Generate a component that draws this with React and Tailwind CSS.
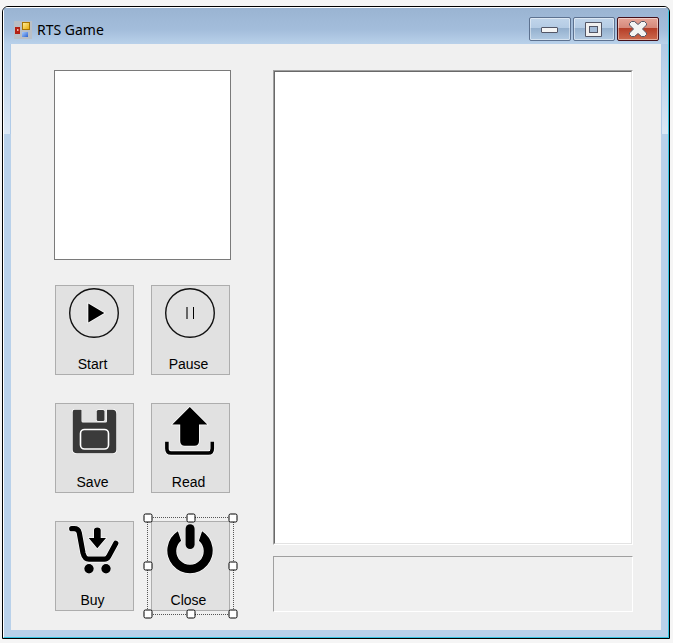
import React from "react";

function StartIcon() {
  return (
    <svg viewBox="0 0 50 50" className="size-[50px]" aria-hidden="true">
      <circle cx="25" cy="25" r="24.3" fill="none" stroke="#111" strokeWidth="1.4" />
      <path d="M19.300 15.600 35.300 25 19.300 34.400Z" fill="#000" stroke="#fff" strokeWidth="1.600" paintOrder="stroke" />
    </svg>
  );
}

function PauseIcon() {
  return (
    <svg viewBox="0 0 50 50" className="size-[50px]" aria-hidden="true">
      <circle cx="25" cy="25" r="24.3" fill="none" stroke="#111" strokeWidth="1.4" />
      <rect x="21" y="19" width="2" height="12" fill="#666" />
      <rect x="28" y="19" width="1" height="12" fill="#000" />
    </svg>
  );
}

function SaveIcon() {
  return (
    <svg viewBox="0 0 50 50" className="size-[50px]" aria-hidden="true">
      <path
        d="M5.500 3.800H12.500V15Q12.500 16.500 14 16.500H36.500Q38 16.500 38 15V3.800H43.500Q47.300 3.800 47.300 8V43.500Q47.300 47.300 43.500 47.300H8Q3.700 47.300 3.700 43.500V6Q3.700 3.800 5.500 3.800Z"
        fill="#383838"
        stroke="#fff"
        strokeWidth="1.400"
        paintOrder="stroke"
      />
      <rect x="13" y="3" width="24.500" height="12.500" fill="#e1e1e1" />
      <rect x="27.700" y="4" width="7.800" height="11" rx="1.500" fill="#383838" stroke="#fff" strokeWidth="1.200" paintOrder="stroke" />
      <rect x="11.500" y="23.500" width="28" height="19.500" rx="4" fill="#3b3b3b" stroke="#fff" strokeWidth="1.600" />
    </svg>
  );
}

function ReadIcon() {
  return (
    <svg viewBox="0 0 50 50" className="size-[50px]" aria-hidden="true">
      <path
        d="M24.800 1 42.300 18.500H34V35Q34 39.700 29.500 39.700H19.700Q15.200 39.700 15.200 35V18.500H7.300Z"
        fill="#000"
        stroke="#fff"
        strokeWidth="1.400"
        paintOrder="stroke"
      />
      <path d="M1.900 35.700V42.500Q1.900 47 6 47H43.500Q47.300 47 47.300 42.500V35.700" fill="none" stroke="#fff" strokeWidth="4.800" />
      <path d="M1.900 35.700V42.500Q1.900 47 6 47H43.500Q47.300 47 47.300 42.500V35.700" fill="none" stroke="#000" strokeWidth="3.600" />
    </svg>
  );
}

const cartFrame = "M2.700 4.700H5.200Q9.300 4.700 10.200 8.500L14 29Q15.500 35.200 20 35.200H35.500Q38 35.200 39.500 32.700L46.800 19.300";

function BuyIcon() {
  return (
    <svg viewBox="0 0 50 50" className="size-[50px] overflow-visible" aria-hidden="true">
      <g fill="none" strokeLinecap="round" strokeLinejoin="round">
        <path d={cartFrame} stroke="#fff" strokeWidth="6.400" />
        <path d={cartFrame} stroke="#000" strokeWidth="5.200" />
      </g>
      <path
        d="M25 6Q25 3.500 28.300 3.500T31.700 6V14H37L28.300 24.300 19.700 14H25Z"
        fill="#000"
        stroke="#fff"
        strokeWidth="1.200"
        paintOrder="stroke"
      />
      <circle cx="20" cy="44.700" r="4.700" stroke="#fff" strokeWidth="1" paintOrder="stroke" />
      <circle cx="37" cy="44.700" r="4.700" stroke="#fff" strokeWidth="1" paintOrder="stroke" />
    </svg>
  );
}

function CloseIcon() {
  return (
    <svg viewBox="0 0 50 50" className="size-[50px]" aria-hidden="true">
      <path
        d="M12.900 7.300A22.700 22.700 0 1 0 37.100 7.300L33.900 16.700A13.700 13.700 0 1 1 16.100 16.700Z"
        fill="#000"
        stroke="#fff"
        strokeWidth="1.200"
        paintOrder="stroke"
      />
      <rect x="20.600" y="0.200" width="9" height="24.800" rx="4.500" fill="#000" stroke="#e8e8e8" strokeWidth="1" paintOrder="stroke" />
    </svg>
  );
}

function FormIcon() {
  return (
    <svg viewBox="0 0 18 18" className="size-[18px]" aria-hidden="true">
      <defs>
        <linearGradient id="gold" x2="1" y2="1">
          <stop stopColor="#fff0a0" />
          <stop offset="1" stopColor="#e8a800" />
        </linearGradient>
        <linearGradient id="sky" x2="1" y2="1">
          <stop stopColor="#a8ccff" />
          <stop offset="1" stopColor="#2b62cf" />
        </linearGradient>
      </defs>
      <rect width="18" height="18" fill="#b9bfc6" />
      <rect x="1" y="6" width="5" height="7" fill="#b32014" />
      <rect x="3" y="8" width="1.500" height="2" fill="#f5b0a0" />
      <rect x="8.500" y="1.500" width="7" height="7" fill="url(#gold)" stroke="#a87400" />
      <rect x="8" y="11" width="6" height="5" fill="url(#sky)" />
    </svg>
  );
}

const actions = [
  { label: "Start", Icon: StartIcon },
  { label: "Pause", Icon: PauseIcon },
  { label: "Save", Icon: SaveIcon },
  { label: "Read", Icon: ReadIcon },
  { label: "Buy", Icon: BuyIcon },
  { label: "Close", Icon: CloseIcon, selected: true },
];

const handles = [
  "left-0 top-0",
  "left-1/2 top-0",
  "left-full top-0",
  "left-0 top-1/2",
  "left-full top-1/2",
  "left-0 top-full",
  "left-1/2 top-full",
  "left-full top-full",
];

function Selection() {
  return (
    <div className="pointer-events-none absolute -inset-1 border border-dotted border-[#555]">
      {handles.map((place) => (
        <span
          key={place}
          className={`absolute size-[9px] -translate-x-1/2 -translate-y-1/2 rounded-[2px] border border-black bg-white ${place}`}
        />
      ))}
    </div>
  );
}

function ActionButton({ label, Icon, selected }) {
  return (
    <div className="relative">
      <button
        type="button"
        className="flex h-[90px] w-full flex-col items-center justify-between border border-[#adadad] bg-[#e1e1e1] pt-[2px] pr-[2px] pb-[2px] text-[14px] leading-4 text-black"
      >
        <Icon />
        <span className="pr-[2px]">{label}</span>
      </button>
      {selected && <Selection />}
    </div>
  );
}

const captionButton =
  "flex h-6 w-[42px] items-center justify-center rounded-[2px] border shadow-[inset_0_0_0_1px_rgba(255,255,255,0.45)]";
const blueCaption =
  "border-[#5d7290] bg-[linear-gradient(#c1d5ea_0%,#b4cbe4_45%,#93afcd_46%,#b3cbe3_100%)]";

function TitleBar() {
  return (
    <header className="flex h-9 items-start justify-between bg-[linear-gradient(#9ab4d2,#a3bddb_60%,#b9d1ea)] pr-[9px] pl-[10px]">
      <div className="flex items-center gap-[5px] pt-3">
        <FormIcon />
        <h1 className="font-['Noto_Sans','Open_Sans',sans-serif] text-[14px] leading-5 text-black">RTS Game</h1>
      </div>
      <div className="flex gap-[2px] pt-[9px]">
        <button type="button" aria-label="Minimize" className={`${captionButton} ${blueCaption}`}>
          <svg viewBox="0 0 18 8" className="mt-[2px] h-2 w-[18px]">
            <rect x="0.500" y="1.500" width="16" height="5" rx="0.500" fill="#f4f4f4" stroke="#535666" />
          </svg>
        </button>
        <button type="button" aria-label="Maximize" className={`${captionButton} ${blueCaption}`}>
          <svg viewBox="0 0 18 16" className="h-4 w-[18px]">
            <path d="M.5 1.500H16.500V15.500H.5Z" fill="#f0f0f0" stroke="#535666" strokeLinejoin="round" />
            <rect x="4.500" y="5.500" width="8" height="6" fill="#a4bcd8" stroke="#535666" />
          </svg>
        </button>
        <button
          type="button"
          aria-label="Close window"
          className={`${captionButton} border-[#43101a] bg-[linear-gradient(#e6a598_0%,#d5887a_45%,#b53d27_46%,#cc6a4e_100%)]`}
        >
          <svg viewBox="0 0 18 16" className="h-4 w-[18px]">
            <path
              d="M.5 2.500 2.500 .5H5.500L9 3.500 12.500 .5H15.500L17.500 2.500V4L13.500 8 17.500 12V13.500L15.500 15.500H12.500L9 12.500 5.500 15.500H2.500L.5 13.500V12L4.500 8 .5 4Z"
              fill="#f3f3f3"
              stroke="#535666"
              strokeLinejoin="round"
            />
          </svg>
        </button>
      </div>
    </header>
  );
}

export default function App() {
  return (
    <main className="min-h-screen bg-[#f5f5f5] pt-[6px] pr-[3px] pb-1 pl-[2px] font-['Liberation_Sans',Arial,sans-serif]">
      <div className="overflow-hidden rounded-t-md border border-black bg-[#b9d1ea]">
        <div className="border border-t-white border-r-[#35c4e0] border-b-[#35c4e0] border-l-white">
          <TitleBar />
          <div className="flex pb-[7px]">
            <div className="h-[90px] w-[7px] border-r border-[#b0cbe8] bg-[linear-gradient(#b9d1ea,#dce8f5)]" />
            <section className="flex flex-1 gap-[42px] bg-[#f0f0f0] pt-[26px] pr-7 pb-[18px] pl-[43px]">
              <div className="w-[177px] shrink-0">
                <textarea
                  aria-label="Map"
                  className="block h-[190px] w-full resize-none border border-[#7a7a7a] bg-white outline-none"
                />
                <div className="mt-[25px] grid grid-cols-2 gap-x-[17px] gap-y-7 px-px">
                  {actions.map((action) => (
                    <ActionButton key={action.label} {...action} />
                  ))}
                </div>
              </div>
              <div className="flex min-w-0 flex-1 flex-col gap-[11px]">
                <div className="h-[475px] border border-t-[#a0a0a0] border-r-white border-b-white border-l-[#a0a0a0]">
                  <div className="h-full border border-t-[#696969] border-r-[#e3e3e3] border-b-[#e3e3e3] border-l-[#696969] bg-white" />
                </div>
                <div className="h-14 border border-t-[#a0a0a0] border-r-white border-b-white border-l-[#a0a0a0]" />
              </div>
            </section>
            <div className="h-[90px] w-[7px] border-l border-[#b0cbe8] bg-[linear-gradient(#b0c9e5,#dce8f5)]" />
          </div>
        </div>
      </div>
    </main>
  );
}
